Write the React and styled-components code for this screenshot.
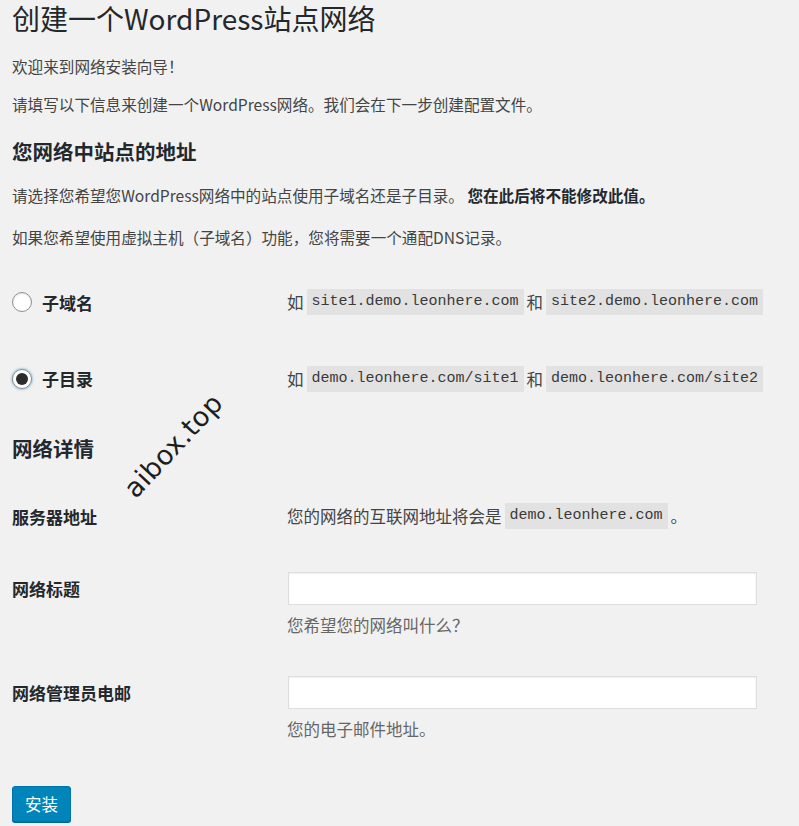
import React from 'react';
import styled, { createGlobalStyle } from 'styled-components';

const GlobalStyle = createGlobalStyle`
  html, body {
    margin: 0;
    padding: 0;
    background: #f1f1f1;
  }
  body {
    font-family: "Noto Sans CJK SC", "Noto Sans", sans-serif;
    color: #444;
  }
`;

const Page = styled.div`
  position: relative;
  padding: 0 12px;
  width: 799px;
  height: 826px;
  box-sizing: border-box;
  overflow: hidden;
`;

const Title = styled.h1`
  margin: 0;
  padding-top: 3px;
  font-size: 28px;
  line-height: 30px;
  font-weight: 400;
  color: #23282d;
`;

const Para = styled.p`
  margin: ${(p) => p.$top || 0}px 0 0;
  font-size: 15.6px;
  line-height: 24px;
`;

const Strong = styled.b`
  color: #23282d;
`;

const SectionTitle = styled.h2`
  margin: ${(p) => p.$top || 0}px 0 0;
  font-size: 20.5px;
  line-height: 28px;
  font-weight: 700;
  color: #23282d;
`;

const Table = styled.div`
  display: grid;
  grid-template-columns: 275px 1fr;
  margin-top: ${(p) => p.$top || 0}px;
`;

const Th = styled.div`
  display: flex;
  align-items: ${(p) => (p.$top ? 'flex-start' : 'center')};
  gap: 10px;
  height: ${(p) => p.$h}px;
  padding-top: ${(p) => p.$pt || 0}px;
  box-sizing: border-box;
  font-size: 17px;
  font-weight: 700;
  color: #23282d;
`;

const Td = styled.div`
  display: flex;
  flex-direction: ${(p) => (p.$col ? 'column' : 'row')};
  align-items: ${(p) => (p.$col ? 'flex-start' : 'center')};
  height: ${(p) => p.$h}px;
  padding-top: ${(p) => p.$pt || 0}px;
  box-sizing: border-box;
  font-size: 16.5px;
  gap: 3px;
`;

const Radio = styled.span`
  width: 20px;
  height: 20px;
  box-sizing: border-box;
  border-radius: 50%;
  border: 1px solid #8c8f94;
  background: #fff;
  display: inline-flex;
  align-items: center;
  justify-content: center;
  box-shadow: ${(p) => (p.$checked ? '0 0 2px 1px rgba(30,140,190,.35)' : 'inset 0 1px 2px rgba(0,0,0,.1)')};
  &::after {
    content: '';
    display: ${(p) => (p.$checked ? 'block' : 'none')};
    width: 12px;
    height: 12px;
    border-radius: 50%;
    background: #2c2c2c;
  }
`;

const Code = styled.code`
  display: inline-block;
  font-family: "Liberation Mono", "DejaVu Sans Mono", monospace;
  font-size: 15px;
  line-height: 26px;
  padding: 0 5px;
  background: #e2e2e2;
  color: #3a3a3a;
`;

const Input = styled.input`
  width: 469px;
  height: 33px;
  box-sizing: border-box;
  margin: 0 0 0 1px;
  border: 1px solid #ddd;
  background: #fff;
  box-shadow: inset 0 1px 2px rgba(0,0,0,.07);
  outline: none;
`;

const Desc = styled.div`
  margin-top: 5px;
  font-size: 16.5px;
  line-height: 24px;
  color: #666;
`;

const Button = styled.button`
  display: block;
  margin-top: ${(p) => p.$top || 0}px;
  width: 59px;
  height: 36px;
  border: 1px solid #0073aa;
  border-radius: 3px;
  background: #0085ba;
  color: #fff;
  font-family: "Noto Sans CJK SC", sans-serif;
  font-size: 16.5px;
  box-shadow: 0 1px 0 #006799;
  padding: 0;
`;

const Watermark = styled.div`
  position: absolute;
  left: 108px;
  top: 430px;
  font-family: "DejaVu Sans", sans-serif;
  font-size: 27px;
  color: #1d1d1d;
  transform: rotate(-47deg);
  transform-origin: center;
  letter-spacing: 0.5px;
`;

export default function App() {
  return (
    <Page>
      <GlobalStyle />
      <Title>创建一个WordPress站点网络</Title>
      <Para $top={21}>欢迎来到网络安装向导！</Para>
      <Para $top={14}>请填写以下信息来创建一个WordPress网络。我们会在下一步创建配置文件。</Para>
      <SectionTitle $top={21}>您网络中站点的地址</SectionTitle>
      <Para $top={18}>
        请选择您希望您WordPress网络中的站点使用子域名还是子目录。 <Strong>您在此后将不能修改此值。</Strong>
      </Para>
      <Para $top={18}>如果您希望使用虚拟主机（子域名）功能，您将需要一个通配DNS记录。</Para>

      <Table $top={15}>
        <Th $h={76}>
          <Radio />
          子域名
        </Th>
        <Td $h={76}>
          如 <Code>site1.demo.leonhere.com</Code> 和 <Code>site2.demo.leonhere.com</Code>
        </Td>
        <Th $h={77}>
          <Radio $checked />
          子目录
        </Th>
        <Td $h={77}>
          如 <Code>demo.leonhere.com/site1</Code> 和 <Code>demo.leonhere.com/site2</Code>
        </Td>
      </Table>

      <SectionTitle $top={17}>网络详情</SectionTitle>

      <Table $top={27}>
        <Th $h={54}>服务器地址</Th>
        <Td $h={54}>
          您的网络的互联网地址将会是 <Code>demo.leonhere.com</Code> 。
        </Td>
        <Th $top $h={104} $pt={33}>网络标题</Th>
        <Td $col $h={104} $pt={29}>
          <Input type="text" />
          <Desc>您希望您的网络叫什么？</Desc>
        </Td>
        <Th $top $h={104} $pt={33}>网络管理员电邮</Th>
        <Td $col $h={104} $pt={29}>
          <Input type="text" />
          <Desc>您的电子邮件地址。</Desc>
        </Td>
      </Table>

      <Button $top={35}>安装</Button>
      <Watermark>aibox.top</Watermark>
    </Page>
  );
}
